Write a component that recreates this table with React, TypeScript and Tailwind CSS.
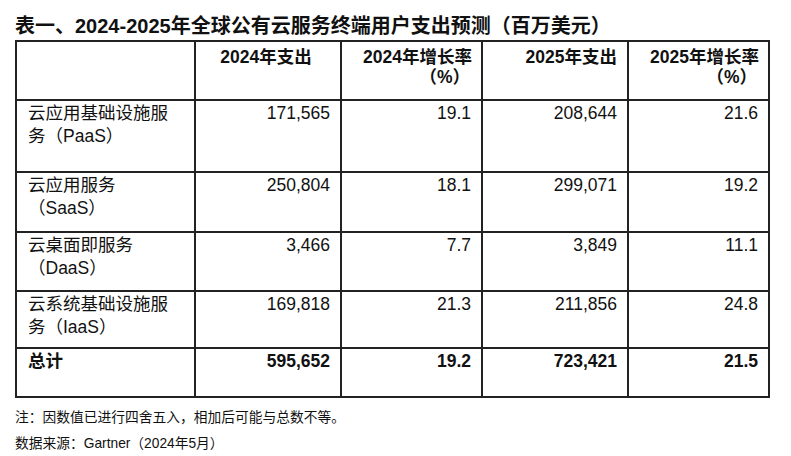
import React from "react";

const font = {
  fontFamily: '"Liberation Sans", "Noto Sans CJK SC", sans-serif',
};

const rows: { name: React.ReactNode; v: string[]; h: string; bold?: boolean }[] = [
  {
    name: (
      <>
        云应用基础设施服
        <br />
        务（PaaS）
      </>
    ),
    v: ["171,565", "19.1", "208,644", "21.6"],
    h: "h-[72px]",
  },
  {
    name: (
      <>
        云应用服务
        <br />
        （SaaS）
      </>
    ),
    v: ["250,804", "18.1", "299,071", "19.2"],
    h: "h-[60px]",
  },
  {
    name: (
      <>
        云桌面即服务
        <br />
        （DaaS）
      </>
    ),
    v: ["3,466", "7.7", "3,849", "11.1"],
    h: "h-[59px]",
  },
  {
    name: (
      <>
        云系统基础设施服
        <br />
        务（IaaS）
      </>
    ),
    v: ["169,818", "21.3", "211,856", "24.8"],
    h: "h-[57px]",
  },
  {
    name: <>总计</>,
    v: ["595,652", "19.2", "723,421", "21.5"],
    h: "h-[49px]",
    bold: true,
  },
];

const cell = "border-r-2 border-b-2 border-[#222]";

export default function App() {
  return (
    <div
      className="w-[791px] h-[456px] bg-white text-[#111] pl-[15px] pt-[14px] overflow-hidden"
      style={font}
    >
      <h1 className="text-[20px] font-bold leading-[24px] whitespace-nowrap">
        表一、2024-2025年全球公有云服务终端用户支出预测（百万美元）
      </h1>
      <div className="mt-[2px] grid grid-cols-[179px_146px_141px_146px_141px] w-[755px] border-t-2 border-l-2 border-[#222] text-[17.5px]">
        {/* header */}
        <div className={`${cell} h-[59px]`} />
        <div className={`${cell} h-[59px] pt-[5px] font-bold leading-[20px] text-center pr-[4px]`}>
          2024年支出
        </div>
        <div className={`${cell} h-[59px] pt-[5px] font-bold leading-[20px] text-right pr-[9px]`}>
          2024年增长率
          <br />
          <span className="pr-[2px]">（%）</span>
        </div>
        <div className={`${cell} h-[59px] pt-[5px] font-bold leading-[20px] text-right pr-[10px]`}>
          2025年支出
        </div>
        <div className={`${cell} h-[59px] pt-[5px] font-bold leading-[20px] text-right pr-[9px]`}>
          2025年增长率
          <br />
          <span className="pr-[2px]">（%）</span>
        </div>
        {rows.map((r, i) => (
          <React.Fragment key={i}>
            <div
              className={`${cell} ${r.h} pl-[11px] pt-[1px] leading-[23px] ${r.bold ? "font-bold" : ""}`}
            >
              {r.name}
            </div>
            {r.v.map((v, j) => (
              <div
                key={j}
                className={`${cell} ${r.h} pt-[1px] pr-[10px] text-right leading-[23px] ${r.bold ? "font-bold" : ""}`}
              >
                {v}
              </div>
            ))}
          </React.Fragment>
        ))}
      </div>
      <div className="mt-[7px] text-[13.75px] leading-[26px]">
        <div>注：因数值已进行四舍五入，相加后可能与总数不等。</div>
        <div>数据来源：Gartner（2024年5月）</div>
      </div>
    </div>
  );
}
